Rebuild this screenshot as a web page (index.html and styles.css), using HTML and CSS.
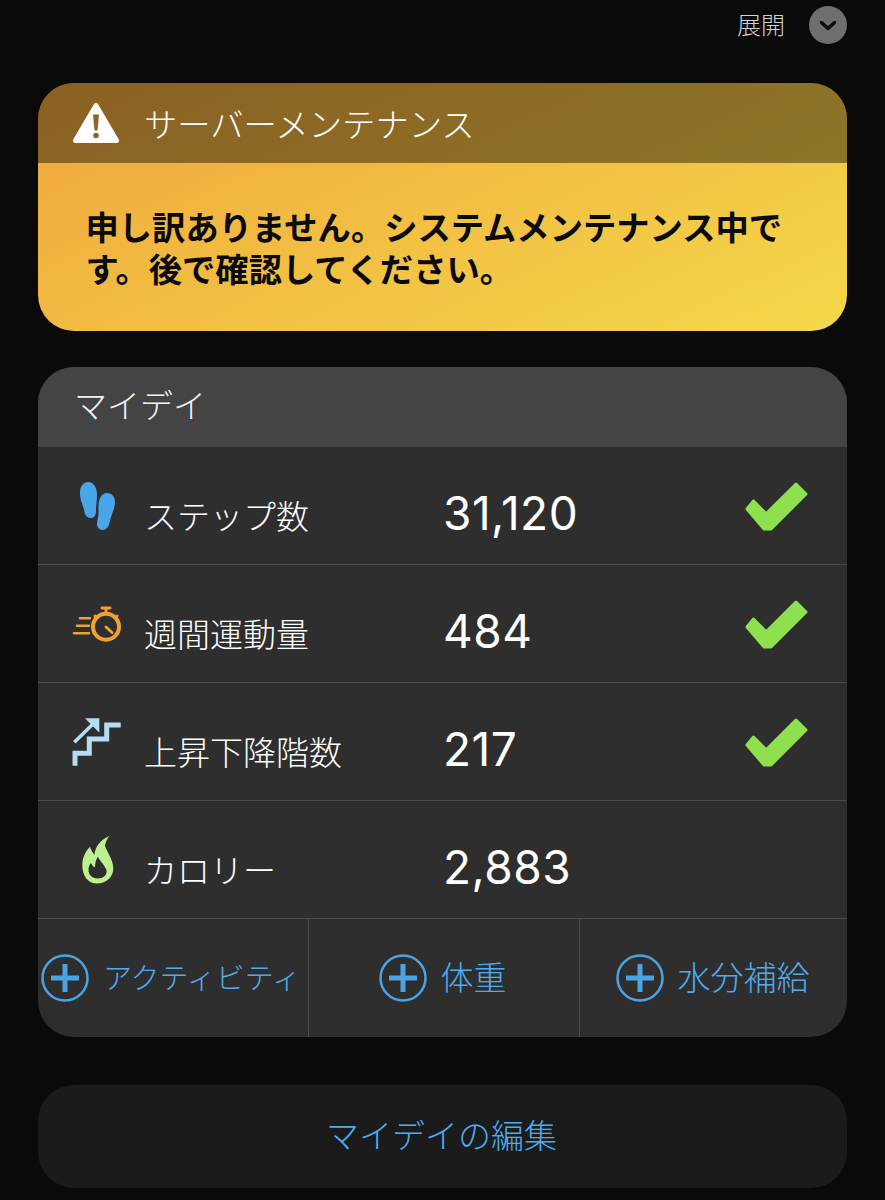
FILE: index.html
```html
<!DOCTYPE html>
<html lang="ja">
<head>
    <meta charset="UTF-8">
    <meta name="viewport" content="width=device-width, initial-scale=1.0">
    <title>マイデイ</title>
    <link rel="stylesheet" href="styles.css">
</head>
<body>
    <div class="page">
        <div class="toolbar">
            <span class="toolbar-label">展開</span>
            <span class="expand-btn">
                <svg width="38" height="38" viewBox="0 0 38 38"><path d="M12.5 16.5 19 22.5 25.5 16.5" fill="none" stroke="#0c0c0c" stroke-width="3.5" stroke-linecap="round" stroke-linejoin="round"/></svg>
            </span>
        </div>

        <div class="alert">
            <div class="alert-head">
                <svg class="alert-icon" width="48" height="42" viewBox="0 0 48 42">
                    <path d="M24 3.5 44.5 38.5H3.5Z" fill="#fff" stroke="#fff" stroke-width="5" stroke-linejoin="round"/>
                    <path d="M21 12.5H27L25.5 28.5H22.5Z" fill="#8c6526"/>
                    <circle cx="24" cy="33.5" r="2.8" fill="#8c6526"/>
                </svg>
                <span class="alert-title">サーバーメンテナンス</span>
            </div>
            <p class="alert-body">申し訳ありません。システムメンテナンス中です。後で確認してください。</p>
        </div>

        <div class="myday">
            <div class="myday-head"><span>マイデイ</span></div>

            <div class="stat-row">
                <svg class="stat-icon" width="60" height="60" viewBox="0 0 60 60">
                    <path d="M22 6C28 6 31 12 31 19 31 25 30 29 30 35 30 39.500 28 42 25 42 21.500 42 19 39.500 18.500 36 18 31 14 25 14 17 14 10 17.500 6 22 6Z" fill="#4ba5ea"/>
                    <path d="M41 17C46 17 49 21 49 26 49 33 45 39 44 45 43 51 40 54 36.500 54 33 54 31 51 31 47.500 31.500 43 33 39.500 32.500 33 32 25 34.500 17 41 17Z" fill="#4ba5ea"/>
                </svg>
                <span class="stat-label">ステップ数</span>
                <span class="stat-value">31,120</span>
                <svg class="stat-check" width="64" height="50" viewBox="0 0 64 50"><path d="M9.500 20 22.200 32.700 52 3 62 13 27 48H20L3 28Z" fill="#8fe04f" stroke="#8fe04f" stroke-width="3" stroke-linejoin="round"/></svg>
            </div>

            <div class="stat-row">
                <svg class="stat-icon" width="60" height="60" viewBox="0 0 60 60">
                    <g fill="none" stroke="#f0a233" stroke-linecap="round">
                        <circle cx="40" cy="32.700" r="13" stroke-width="4"/>
                        <path d="M36 14H44M40 14V19M29 22 31 24M51 22 49 24" stroke-width="3"/>
                        <path d="M40 33 46 38.500" stroke-width="3"/>
                        <path d="M14 24.300H24M11 31.700H23M8 39.300H23" stroke-width="2.500"/>
                    </g>
                </svg>
                <span class="stat-label">週間運動量</span>
                <span class="stat-value">484</span>
                <svg class="stat-check" width="64" height="50" viewBox="0 0 64 50"><path d="M9.500 20 22.200 32.700 52 3 62 13 27 48H20L3 28Z" fill="#8fe04f" stroke="#8fe04f" stroke-width="3" stroke-linejoin="round"/></svg>
            </div>

            <div class="stat-row">
                <svg class="stat-icon" width="60" height="60" viewBox="0 0 60 60">
                    <path d="M9 53.700V41.300H23.300V27H40.700V13H54.700" fill="none" stroke="#b6dcf5" stroke-width="5"/>
                    <path d="M8.300 30.300 28 11" fill="none" stroke="#b6dcf5" stroke-width="3.500"/>
                    <path d="M19 6.300H33.300V20.700Z" fill="#b6dcf5"/>
                </svg>
                <span class="stat-label">上昇下降階数</span>
                <span class="stat-value">217</span>
                <svg class="stat-check" width="64" height="50" viewBox="0 0 64 50"><path d="M9.500 20 22.200 32.700 52 3 62 13 27 48H20L3 28Z" fill="#8fe04f" stroke="#8fe04f" stroke-width="3" stroke-linejoin="round"/></svg>
            </div>

            <div class="stat-row">
                <svg class="stat-icon" width="60" height="60" viewBox="0 0 60 60">
                    <path fill-rule="evenodd" fill="#bdf08e" d="M43.300 6C34 10 29 17 28.500 25 27 23 25 20 24 16.700 19 22 16.300 28 16.300 35 16.300 46 22 53.500 31 53.500 41 53.500 47.300 46.500 47.300 38.500 47.300 30 41 22 39 16 39.500 12 41 9 43.300 6ZM32 26.700C33 30 38 34 40.500 40 41.500 45 37 48.500 31.500 48.500 26 48.500 22.500 44.500 22.500 40 22.500 37 23.500 34.500 25 33 26 35 27 36.500 29 37.500 29 33 30 29 32 26.700Z"/>
                </svg>
                <span class="stat-label">カロリー</span>
                <span class="stat-value">2,883</span>
            </div>

            <div class="actions">
                <a class="action action-long">
                    <svg width="48" height="48" viewBox="0 0 48 48"><circle cx="24" cy="24" r="22.500" fill="none" stroke="#4ba3e3" stroke-width="2.500"/><path d="M24 10V38M10 24H38" stroke="#4ba3e3" stroke-width="5"/></svg>
                    <span>アクティビティ</span>
                </a>
                <a class="action">
                    <svg width="48" height="48" viewBox="0 0 48 48"><circle cx="24" cy="24" r="22.500" fill="none" stroke="#4ba3e3" stroke-width="2.500"/><path d="M24 10V38M10 24H38" stroke="#4ba3e3" stroke-width="5"/></svg>
                    <span>体重</span>
                </a>
                <a class="action">
                    <svg width="48" height="48" viewBox="0 0 48 48"><circle cx="24" cy="24" r="22.500" fill="none" stroke="#4ba3e3" stroke-width="2.500"/><path d="M24 10V38M10 24H38" stroke="#4ba3e3" stroke-width="5"/></svg>
                    <span>水分補給</span>
                </a>
            </div>
        </div>

        <div class="edit-btn"><span>マイデイの編集</span></div>
    </div>
</body>
</html>
```

FILE: styles.css
```css
body { margin: 0; background-color: #0a0a0a; color: #fff; font-family: "Noto Sans CJK JP", "Noto Sans", sans-serif; font-weight: 300; }
.page { padding: 6px 38px 12px; }

.toolbar { display: flex; justify-content: flex-end; align-items: center; gap: 24px; height: 38px; margin-bottom: 39px; }
.toolbar-label { font-size: 24px; color: #d2d2d2; padding-bottom: 4px; }
.expand-btn { width: 38px; height: 38px; border-radius: 50%; background-color: #6f6f6f; display: flex; }

.alert { height: 248px; border-radius: 36px; overflow: hidden; background: linear-gradient(155deg, #f0a63c 0%, #f4d84a 100%); }
.alert-head { height: 80px; display: flex; align-items: center; background-color: rgba(0,0,0,0.42); }
.alert-icon { margin-left: 34px; }
.alert-title { margin-left: 24px; padding-bottom: 2px; font-size: 33.300px; color: #fff; }
.alert-body { margin: 0; padding: 42px 47px 0 47.500px; font-size: 33.300px; line-height: 42px; font-weight: 700; color: #0a0a0a; }

.myday { margin-top: 36px; height: 670px; border-radius: 36px; overflow: hidden; background-color: #2e2e2e; }
.myday-head { height: 80px; padding-left: 36px; display: flex; align-items: center; background-color: #444; font-size: 33px; color: #f2f2f2; }
.myday-head span { padding-bottom: 6px; }

.stat-row { height: 118px; box-sizing: border-box; display: grid; grid-template-columns: 107px 299px 1fr auto; align-items: center; padding-right: 39px; border-bottom: 1px solid #4d4d4d; }
.stat-icon { margin-left: 28px; }
.stat-label { font-size: 33px; margin-top: 18px; margin-left: -1px; color: #fff; }
.stat-value { font-family: "Inter", sans-serif; font-weight: 400; font-size: 46px; letter-spacing: 0.500px; margin-top: 15px; margin-left: -1px; }
.stat-check { display: block; }

.actions { height: 118px; box-sizing: border-box; display: grid; grid-template-columns: 271px 271px 1fr; }
.action { display: flex; align-items: center; justify-content: center; gap: 14px; font-size: 33px; color: #50abee; border-right: 1px solid #4d4d4d; }
.action span { padding-bottom: 4px; }
.action:nth-child(2) { padding-right: 3px; }
.action:last-child { border-right: 0; padding-right: 2px; }
.action-long { font-size: 29px; gap: 14px; justify-content: flex-start; padding-left: 3px; }

.edit-btn { margin-top: 48px; height: 103px; border-radius: 36px; background-color: #1b1b1b; display: flex; align-items: center; justify-content: center; font-size: 33px; color: #50abee; }
.edit-btn span { padding-bottom: 6px; margin-left: -2px; }
```
